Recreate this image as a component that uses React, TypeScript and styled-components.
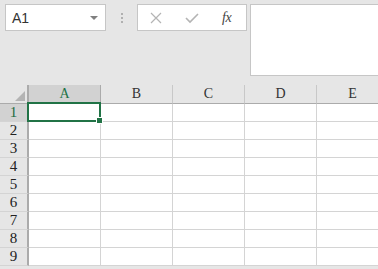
import styled, { createGlobalStyle } from "styled-components";

const GlobalStyle = createGlobalStyle`
  html, body {
    margin: 0;
    padding: 0;
    background: #e6e6e6;
    overflow: hidden;
  }
  body {
    font-family: "Liberation Sans", Arial, sans-serif;
  }
`;

const Page = styled.div`
  width: 378px;
  height: 269px;
  overflow: hidden;
  background: #e6e6e6;
`;

const Toolbar = styled.div`
  display: flex;
  align-items: flex-start;
  padding: 4px 0 0 5px;
  height: 85px;
  box-sizing: border-box;
`;

const NameBox = styled.div`
  width: 101px;
  height: 27px;
  box-sizing: border-box;
  border: 1px solid #c6c6c6;
  background: #ffffff;
  display: flex;
  align-items: center;
  justify-content: space-between;
  padding: 0 7px 0 6px;
  font-size: 14px;
  color: #333333;
`;

const Caret = styled.span`
  width: 0;
  height: 0;
  border-left: 4px solid transparent;
  border-right: 4px solid transparent;
  border-top: 4px solid #808080;
`;

const Grip = styled.div`
  width: 31px;
  height: 27px;
  display: flex;
  flex-direction: column;
  align-items: center;
  justify-content: center;
  gap: 2px;

  span {
    width: 2px;
    height: 2px;
    background: #b0b0b0;
  }
`;

const FormulaTools = styled.div`
  width: 110px;
  height: 27px;
  box-sizing: border-box;
  border: 1px solid #c6c6c6;
  background: #ffffff;
  display: flex;
  align-items: center;
  padding-left: 12px;
  gap: 23px;
`;

const Fx = styled.span`
  font-family: "Liberation Serif", "Times New Roman", serif;
  font-style: italic;
  font-size: 14px;
  color: #444444;
  letter-spacing: -0.5px;
`;

const FormulaInput = styled.div`
  margin-left: 3px;
  flex: 1;
  height: 72px;
  box-sizing: border-box;
  border: 1px solid #c6c6c6;
  border-right: none;
  background: #ffffff;
`;

const Sheet = styled.div`
  display: flex;
  flex-direction: column;
  background: #ffffff;
`;

const Row = styled.div`
  display: flex;
`;

const Corner = styled.div`
  width: 27px;
  height: 18px;
  flex-shrink: 0;
  border-right: 2px solid #ababab;
  border-bottom: 1px solid #ababab;
  background: #e6e6e6;
  position: relative;

  svg {
    position: absolute;
    right: 2px;
    bottom: 2px;
  }
`;

const ColHead = styled.div<{ $active?: boolean }>`
  width: 71px;
  height: 18px;
  flex-shrink: 0;
  border-right: 1px solid ${(p) => (p.$active ? "#ababab" : "#c8c8c8")};
  border-bottom: 1px solid ${(p) => (p.$active ? "#217346" : "#ababab")};
  background: ${(p) => (p.$active ? "#d2d2d2" : "#e6e6e6")};
  color: ${(p) => (p.$active ? "#217346" : "#333333")};
  font-family: "Liberation Serif", "Times New Roman", serif;
  font-size: 14px;
  display: flex;
  align-items: center;
  justify-content: center;
`;

const RowHead = styled.div<{ $active?: boolean }>`
  width: 27px;
  height: 17px;
  flex-shrink: 0;
  border-right: 2px solid #ababab;
  border-bottom: 1px solid #d4d4d4;
  background: ${(p) => (p.$active ? "#d2d2d2" : "#e6e6e6")};
  color: ${(p) => (p.$active ? "#1e6b41" : "#222222")};
  font-family: "Liberation Serif", "Times New Roman", serif;
  font-size: 15px;
  display: flex;
  align-items: center;
  justify-content: center;
`;

const Cell = styled.div`
  position: relative;
  width: 71px;
  height: 17px;
  flex-shrink: 0;
  border-right: 1px solid #d4d4d4;
  border-bottom: 1px solid #d4d4d4;
  background: #ffffff;
`;

const Selection = styled.div`
  position: absolute;
  left: -2px;
  top: -2px;
  width: 74px;
  height: 20px;
  box-sizing: border-box;
  border: 2px solid #217346;
  z-index: 2;
`;

const Handle = styled.div`
  position: absolute;
  right: -4px;
  bottom: -4px;
  width: 5px;
  height: 5px;
  background: #217346;
  border: 1px solid #ffffff;
`;

const columns = ["A", "B", "C", "D", "E"];
const rows = [1, 2, 3, 4, 5, 6, 7, 8, 9];

export default function App() {
  return (
    <Page>
      <GlobalStyle />
      <Toolbar>
        <NameBox>
          A1
          <Caret />
        </NameBox>
        <Grip>
          <span />
          <span />
          <span />
        </Grip>
        <FormulaTools>
          <svg width="12" height="12" viewBox="0 0 12 12">
            <path d="M1 1 L11 11 M11 1 L1 11" stroke="#b4b4b4" strokeWidth="1.2" fill="none" />
          </svg>
          <svg width="14" height="12" viewBox="0 0 14 12">
            <path d="M1 6 L5 10 L13 2" stroke="#b4b4b4" strokeWidth="1.6" fill="none" />
          </svg>
          <Fx>fx</Fx>
        </FormulaTools>
        <FormulaInput />
      </Toolbar>
      <Sheet>
        <Row>
          <Corner>
            <svg width="10" height="10" viewBox="0 0 10 10">
              <polygon points="10,0 10,10 0,10" fill="#b4b4b4" />
            </svg>
          </Corner>
          {columns.map((c) => (
            <ColHead key={c} $active={c === "A"}>
              {c}
            </ColHead>
          ))}
        </Row>
        {rows.map((r) => (
          <Row key={r}>
            <RowHead $active={r === 1}>{r}</RowHead>
            {columns.map((c) => (
              <Cell key={c}>
                {r === 1 && c === "A" && (
                  <Selection>
                    <Handle />
                  </Selection>
                )}
              </Cell>
            ))}
          </Row>
        ))}
      </Sheet>
    </Page>
  );
}
